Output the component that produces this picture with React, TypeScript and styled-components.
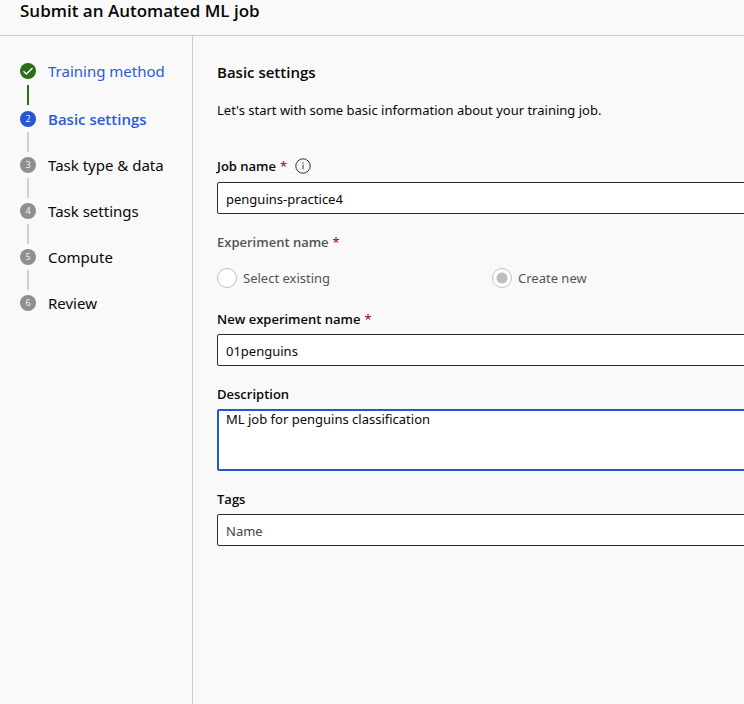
import React from "react";
import styled, { createGlobalStyle } from "styled-components";

const strongFont = `"Segoe UI Semibold", "Open Sans", "Noto Sans", sans-serif`;

const Global = createGlobalStyle`
  *, *::before, *::after { box-sizing: border-box; }
  body {
    margin: 0;
    background: #f9f9f9;
    color: #080808;
    font: 13px/20px "Segoe UI", "Noto Sans", "Open Sans", sans-serif;
  }
  input, textarea, button { font: inherit; color: inherit; }
`;

const Page = styled.div`
  display: flex;
  flex-direction: column;
  min-height: 100vh;
  overflow: hidden;
`;

const Header = styled.header`
  height: 36px;
  padding: 0 20px;
  border-bottom: 1px solid #ccc;
`;

const Title = styled.h1`
  margin: 0;
  font-family: ${strongFont};
  font-size: 17px;
  line-height: 22px;
  font-weight: 600;
`;

const Body = styled.div`
  display: flex;
  flex: 1;
`;

const Sidebar = styled.nav`
  flex: 0 0 193px;
  padding: 27px 0 0 20px;
  border-right: 1px solid #ccc;
`;

const Steps = styled.ol`
  list-style: none;
  margin: 0;
  padding: 0;
`;

type State = "done" | "current" | "todo";
const markColor = { done: "#2a6e1a", current: "#2457d0", todo: "#8f8f8f" };

const Step = styled.li<{ $state: State }>`
  &:not(:last-child)::after {
    content: "";
    display: block;
    width: 2px;
    height: 20px;
    margin: ${(p) => (p.$state === "done" ? "6px 7px" : "5px 7px")};
    background: ${(p) => (p.$state === "done" ? "#2a6e1a" : "#d0d0d0")};
  }
`;

const StepLink = styled.a<{ $state: State }>`
  display: flex;
  align-items: center;
  gap: 12px;
  height: 16px;
  font-size: 15px;
  white-space: nowrap;
  text-decoration: none;
  color: ${(p) => (p.$state === "todo" ? "#080808" : "#2c5bd6")};
  ${(p) => p.$state === "current" && `font-family: ${strongFont}; font-weight: 600;`}
`;

const Mark = styled.span<{ $state: State }>`
  display: flex;
  flex: none;
  align-items: center;
  justify-content: center;
  width: 16px;
  height: 16px;
  border-radius: 50%;
  background: ${(p) => markColor[p.$state]};
  color: #f4f4f4;
  font-size: 9px;
  line-height: 16px;
  font-weight: 400;
`;

const Main = styled.main`
  flex: 1;
  min-width: 0;
  padding: 25px 0 24px 24px;
`;

const Heading = styled.h2`
  margin: 0;
  font-family: ${strongFont};
  font-size: 15px;
  line-height: 22px;
  font-weight: 600;
`;

const Intro = styled.p`
  margin: 17px 0 36px;
`;

const Form = styled.form`
  display: flex;
  flex-direction: column;
  gap: 18px;
  margin-right: -23px;
`;

const Field = styled.div`
  display: flex;
  flex-direction: column;
  gap: 5px;
`;

const LabelRow = styled.div`
  display: flex;
  align-items: center;
  gap: 8px;
  margin-bottom: 1px;
`;

const Label = styled.label`
  font-family: ${strongFont};
  font-weight: 600;
`;

const Required = styled.span`
  margin-left: 4px;
  color: #a4262c;
`;

const InfoButton = styled.button`
  display: flex;
  padding: 0;
  border: 0;
  background: none;
  color: #333;
`;

const TextInput = styled.input`
  width: 100%;
  height: 32px;
  padding: 2px 8px 0;
  border: 1px solid #2b2b2b;
  border-radius: 2px;
  background: #fff;
  outline: none;
  &::placeholder { color: #444; opacity: 1; }
`;

const TextArea = styled.textarea`
  display: block;
  width: 100%;
  height: 62px;
  padding: 0 7px;
  border: 2px solid #2457d0;
  border-radius: 2px;
  background: #fff;
  line-height: 16px;
  outline: none;
  resize: none;
`;

const RadioGroup = styled.fieldset`
  margin: 0 0 3px;
  padding: 0;
  border: 0;
  color: #555;
`;

const Legend = styled.legend`
  padding: 0;
  margin-bottom: 16px;
  font-family: ${strongFont};
  font-weight: 600;
`;

const Options = styled.div`
  display: grid;
  grid-template-columns: 1fr 1fr;
`;

const Option = styled.label`
  display: flex;
  align-items: center;
  gap: 6px;
`;

const Radio = styled.input`
  appearance: none;
  width: 20px;
  height: 20px;
  margin: 0;
  border: 1px solid #c0c0c0;
  border-radius: 50%;
  background: #fff;
  &:checked {
    background: radial-gradient(circle, #bebebe 0 5px, #fff 6px);
  }
`;

const steps: { label: string; state: State }[] = [
  { label: "Training method", state: "done" },
  { label: "Basic settings", state: "current" },
  { label: "Task type & data", state: "todo" },
  { label: "Task settings", state: "todo" },
  { label: "Compute", state: "todo" },
  { label: "Review", state: "todo" },
];

const CheckIcon = () => (
  <svg width="16" height="16" viewBox="0 0 16 16" fill="none" aria-hidden="true">
    <path d="M3.5 8.2 6.4 11 12.5 5" stroke="#fff" strokeWidth="1.3" />
  </svg>
);

const InfoIcon = () => (
  <svg width="16" height="16" viewBox="0 0 16 16" fill="none" aria-hidden="true">
    <circle cx="8" cy="8" r="7.2" stroke="currentColor" strokeWidth="1" />
    <path d="M8 6.6V11.2" stroke="currentColor" strokeWidth="1" />
    <circle cx="8" cy="4.9" r="0.7" fill="currentColor" />
  </svg>
);

export default function App() {
  return (
    <Page>
      <Global />
      <Header>
        <Title>Submit an Automated ML job</Title>
      </Header>
      <Body>
        <Sidebar aria-label="Steps">
          <Steps>
            {steps.map(({ label, state }, i) => (
              <Step key={label} $state={state}>
                <StepLink href="#" $state={state} aria-current={state === "current" ? "step" : undefined}>
                  <Mark $state={state}>{state === "done" ? <CheckIcon /> : i + 1}</Mark>
                  {label}
                </StepLink>
              </Step>
            ))}
          </Steps>
        </Sidebar>
        <Main>
          <Heading>Basic settings</Heading>
          <Intro>Let's start with some basic information about your training job.</Intro>
          <Form>
            <Field>
              <LabelRow>
                <Label htmlFor="job">
                  Job name<Required>*</Required>
                </Label>
                <InfoButton type="button" aria-label="About job name">
                  <InfoIcon />
                </InfoButton>
              </LabelRow>
              <TextInput id="job" defaultValue="penguins-practice4" />
            </Field>
            <RadioGroup disabled>
              <Legend>
                Experiment name<Required>*</Required>
              </Legend>
              <Options>
                <Option>
                  <Radio type="radio" name="experiment" />
                  Select existing
                </Option>
                <Option>
                  <Radio type="radio" name="experiment" defaultChecked />
                  Create new
                </Option>
              </Options>
            </RadioGroup>
            <Field>
              <Label htmlFor="experiment">
                New experiment name<Required>*</Required>
              </Label>
              <TextInput id="experiment" defaultValue="01penguins" />
            </Field>
            <Field>
              <Label htmlFor="description">Description</Label>
              <TextArea id="description" defaultValue="ML job for penguins classification" />
            </Field>
            <Field>
              <Label htmlFor="tags">Tags</Label>
              <TextInput id="tags" placeholder="Name" />
            </Field>
          </Form>
        </Main>
      </Body>
    </Page>
  );
}
